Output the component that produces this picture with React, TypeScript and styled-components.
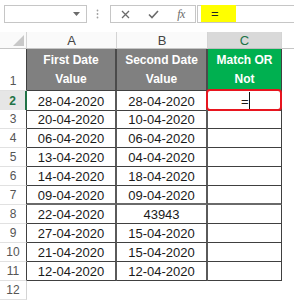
import React from "react";
import styled, { createGlobalStyle, css } from "styled-components";

const Global = createGlobalStyle`
  html, body { margin: 0; padding: 0; background: #ffffff; }
  body {
    font-family: "Liberation Sans", Arial, sans-serif;
    width: 294px;
    height: 300px;
    overflow: hidden;
  }
  * { box-sizing: border-box; }
`;

const COLS = "27px 90px 91px 74px 1fr";

const Page = styled.div`
  display: flex;
  flex-direction: column;
  width: 294px;
  height: 300px;
  overflow: hidden;
  background: #fff;
`;

/* ---------- Formula bar ---------- */
const FormulaBar = styled.div`
  display: flex;
  align-items: flex-start;
  height: 32px;
  padding: 5px 0 0 4px;
`;

const NameBox = styled.div`
  width: 83px;
  height: 18px;
  border: 1px solid #c6c6c6;
  background: #fff;
  display: flex;
  align-items: center;
  justify-content: flex-end;
  padding-right: 6px;
`;

const Dots = styled.div`
  width: 20px;
  height: 18px;
  margin-right: 3px;
  display: flex;
  align-items: center;
  justify-content: center;
`;

const ButtonBox = styled.div`
  width: 86px;
  height: 18px;
  border: 1px solid #c6c6c6;
  background: #fff;
  display: flex;
  align-items: center;
  padding-left: 0px;
`;

const IconSlot = styled.div`
  width: 28px;
  height: 16px;
  display: flex;
  align-items: center;
  justify-content: center;
`;

const Fx = styled.span`
  font-family: "Liberation Serif", "Times New Roman", serif;
  font-style: italic;
  font-size: 12px;
  color: #6b6b6b;
  letter-spacing: -0.5px;
`;

const FormulaInput = styled.div`
  flex: 1;
  height: 18px;
  margin-left: 1px;
  border: 1px solid #c6c6c6;
  border-right: none;
  background: #fff;
  display: flex;
  align-items: flex-end;
  padding-left: 3px;
`;

const Highlight = styled.div`
  width: 35px;
  height: 17px;
  background: #ffff00;
  display: flex;
  align-items: center;
  padding-left: 10px;
  font-size: 13px;
  color: #222;
`;

/* ---------- Sheet ---------- */
const Sheet = styled.div`
  display: flex;
  flex-direction: column;
`;

const Row = styled.div<{ $h: number }>`
  display: grid;
  grid-template-columns: ${COLS};
  height: ${(p) => p.$h}px;
`;

const Corner = styled.div`
  background: #fafafa;
  border-right: 1px solid #d4d4d4;
  border-bottom: 1px solid #c6c6c6;
  display: flex;
  align-items: flex-end;
  justify-content: flex-end;
  padding: 0 2px 2px 0;
`;

const ColHead = styled.div<{ $sel?: boolean }>`
  background: ${(p) => (p.$sel ? "#d9d9d9" : "#fafafa")};
  border-right: 1px solid #d4d4d4;
  border-bottom: 1px solid ${(p) => (p.$sel ? "#bdbdbd" : "#c6c6c6")};
  color: ${(p) => (p.$sel ? "#217346" : "#444")};
  font-size: 13px;
  display: flex;
  align-items: center;
  justify-content: center;
  padding-top: 1px;
`;

const HeadFiller = styled.div`
  background: #fff;
  border-bottom: 1px solid #c6c6c6;
`;

const RowHead = styled.div<{ $sel?: boolean; $inTable?: boolean }>`
  background: ${(p) => (p.$sel ? "#e6e6e6" : "#fff")};
  color: ${(p) => (p.$sel ? "#217346" : "#555")};
  font-weight: ${(p) => (p.$sel ? 700 : 400)};
  font-size: 12px;
  border-bottom: 1px solid #e1e1e1;
  border-right: ${(p) =>
    p.$sel ? "2px solid #217346" : p.$inTable ? "1px solid #404040" : "1px solid #d4d4d4"};
  display: flex;
  align-items: flex-end;
  justify-content: center;
  padding-bottom: 2px;
`;

const HeaderCell = styled.div<{ $green?: boolean; $thickRight?: boolean }>`
  background: ${(p) => (p.$green ? "#00b050" : "#808080")};
  color: #fff;
  font-weight: 700;
  font-size: 12px;
  line-height: 19px;
  text-align: center;
  display: flex;
  align-items: center;
  justify-content: center;
  border-bottom: 1px solid #404040;
  border-right: ${(p) => (p.$thickRight ? "2px solid #4a4a4a" : "1px solid #404040")};
`;

const DataCell = styled.div<{ $thickRight?: boolean; $thickBottom?: boolean }>`
  position: relative;
  font-size: 13px;
  color: #1a1a1a;
  display: flex;
  align-items: center;
  justify-content: center;
  padding-top: 1px;
  border-right: ${(p) => (p.$thickRight ? "2px solid #5a5a5a" : "1px solid #404040")};
  ${(p) =>
    p.$thickBottom
      ? css`border-bottom: 2px solid #6a6a6a;`
      : css`border-bottom: 1px solid #404040;`}
`;

const ActiveCell = styled(DataCell)`
  justify-content: flex-start;
  padding-left: 33px;
`;

const Cursor = styled.span`
  display: block;
  width: 1px;
  height: 18px;
  background: #111;
  margin-left: 0px;
`;

const RedMark = styled.div`
  position: absolute;
  left: -2px;
  top: -2px;
  right: -1px;
  bottom: -1px;
  border: 2px solid #e8151f;
  border-radius: 4px;
  pointer-events: none;
`;

const Blank = styled.div``;

const data: [string, string][] = [
  ["28-04-2020", "28-04-2020"],
  ["20-04-2020", "10-04-2020"],
  ["06-04-2020", "06-04-2020"],
  ["13-04-2020", "04-04-2020"],
  ["14-04-2020", "18-04-2020"],
  ["09-04-2020", "09-04-2020"],
  ["22-04-2020", "43943"],
  ["27-04-2020", "15-04-2020"],
  ["21-04-2020", "15-04-2020"],
  ["12-04-2020", "12-04-2020"],
];

export default function App() {
  return (
    <Page>
      <Global />
      <FormulaBar>
        <NameBox>
          <svg width="7" height="4" viewBox="0 0 7 4">
            <path d="M0 0 L7 0 L3.5 4 Z" fill="#6b6b6b" />
          </svg>
        </NameBox>
        <Dots>
          <svg width="3" height="10" viewBox="0 0 3 10">
            <circle cx="1.5" cy="1.5" r="0.9" fill="#a0a0a0" />
            <circle cx="1.5" cy="5" r="0.9" fill="#a0a0a0" />
            <circle cx="1.5" cy="8.5" r="0.9" fill="#a0a0a0" />
          </svg>
        </Dots>
        <ButtonBox>
          <IconSlot>
            <svg width="9" height="9" viewBox="0 0 9 9">
              <path d="M1 1 L8 8 M8 1 L1 8" stroke="#6b6b6b" strokeWidth="1.3" />
            </svg>
          </IconSlot>
          <IconSlot>
            <svg width="11" height="9" viewBox="0 0 11 9">
              <path d="M1 4.5 L4 7.5 L10 1" stroke="#6b6b6b" strokeWidth="1.6" fill="none" />
            </svg>
          </IconSlot>
          <IconSlot>
            <Fx>fx</Fx>
          </IconSlot>
        </ButtonBox>
        <FormulaInput>
          <Highlight>=</Highlight>
        </FormulaInput>
      </FormulaBar>

      <Sheet>
        <Row $h={17}>
          <Corner>
            <svg width="11" height="11" viewBox="0 0 11 11">
              <path d="M11 0 L11 11 L0 11 Z" fill="#c8c8c8" />
            </svg>
          </Corner>
          <ColHead>A</ColHead>
          <ColHead>B</ColHead>
          <ColHead $sel>C</ColHead>
          <HeadFiller />
        </Row>

        <Row $h={42}>
          <RowHead $inTable>1</RowHead>
          <HeaderCell $thickRight>
            First Date
            <br />
            Value
          </HeaderCell>
          <HeaderCell $thickRight>
            Second Date
            <br />
            Value
          </HeaderCell>
          <HeaderCell $green>
            Match OR
            <br />
            Not
          </HeaderCell>
          <Blank />
        </Row>

        {data.map(([a, b], i) => {
          const n = i + 2;
          const thick = n === 7;
          return (
            <Row $h={19} key={n}>
              <RowHead $inTable $sel={n === 2}>
                {n}
              </RowHead>
              <DataCell $thickRight $thickBottom={thick}>
                {a}
              </DataCell>
              <DataCell $thickRight $thickBottom={thick}>
                {b}
              </DataCell>
              {n === 2 ? (
                <ActiveCell>
                  =<Cursor />
                  <RedMark />
                </ActiveCell>
              ) : (
                <DataCell $thickBottom={thick} />
              )}
              <Blank />
            </Row>
          );
        })}

        <Row $h={19}>
          <RowHead>12</RowHead>
          <Blank />
          <Blank />
          <Blank />
          <Blank />
        </Row>
      </Sheet>
    </Page>
  );
}
